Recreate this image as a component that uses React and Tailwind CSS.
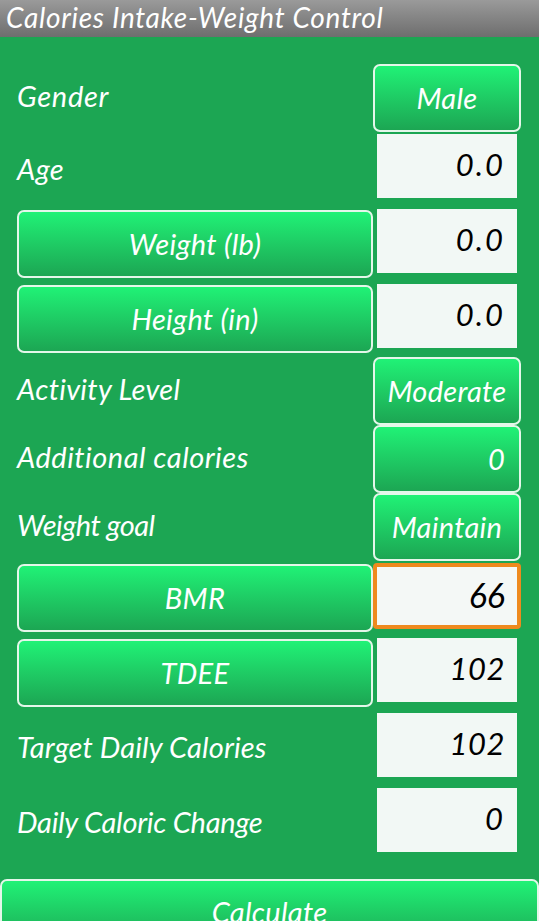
import React from 'react';

const font = "font-['Lato','Noto_Sans',sans-serif] italic";

const GreenButton = ({ children, className = '' }) => (
    <div className={`flex items-center rounded-[7px] border-2 border-[#e4f7ea] bg-gradient-to-b from-[#20f276] to-[#1ca653] text-[29px] tracking-[0.3px] text-white ${className}`}>
        {children}
    </div>
);

const Field = ({ value, className = 'tracking-[2px]' }) => (
    <div className={`mx-1 mt-[2px] flex h-[64px] items-center justify-end bg-[#f2f8f5] pr-[12px] pb-1 text-[31px] text-black ${className}`}>
        {value}
    </div>
);

const Label = ({ children, className = 'tracking-[0.4px]' }) => (
    <div className={`flex-1 pb-1 text-[29px] text-white ${className}`}>{children}</div>
);

const Row = ({ height, children }) => (
    <div className={`flex items-center pl-[17px] pr-[18px] ${height}`}>{children}</div>
);

const App = () => {
    return (
        <div className={`relative flex h-[921px] w-[539px] flex-col overflow-hidden bg-[#1ca653] ${font}`}>
            <div className="flex h-[37px] items-center bg-gradient-to-b from-[#9a9a9a] to-[#6e6e6e] pb-1 pl-[6px] text-[28px] tracking-[0.7px] text-white">
                Calories Intake-Weight Control
            </div>

            <div className="mt-[27px] flex flex-col">
                <Row height="h-[68px]">
                    <Label className="tracking-[0.7px]">Gender</Label>
                    <GreenButton className="h-[68px] w-[148px] justify-center">Male</GreenButton>
                </Row>
                <Row height="h-[75px] items-start">
                    <div className="flex-1 pt-[15px] text-[29px] tracking-[0.4px] text-white">Age</div>
                    <div className="w-[148px]"><Field value="0.0" /></div>
                </Row>
                <Row height="h-[75px] items-start">
                    <GreenButton className="mt-[3px] h-[68px] flex-1 justify-center">Weight (lb)</GreenButton>
                    <div className="w-[148px]"><Field value="0.0" /></div>
                </Row>
                <Row height="h-[75px] items-start">
                    <GreenButton className="mt-[3px] h-[68px] flex-1 justify-center">Height (in)</GreenButton>
                    <div className="w-[148px]"><Field value="0.0" /></div>
                </Row>
                <Row height="h-[68px]">
                    <Label className="tracking-[0.3px]">Activity Level</Label>
                    <GreenButton className="h-[68px] w-[148px] justify-center">Moderate</GreenButton>
                </Row>
                <Row height="h-[68px]">
                    <Label className="tracking-[0.5px]">Additional calories</Label>
                    <GreenButton className="h-[68px] w-[148px] justify-end pr-[14px]">0</GreenButton>
                </Row>
                <Row height="h-[68px]">
                    <Label className="tracking-[-0.5px]">Weight goal</Label>
                    <GreenButton className="h-[68px] w-[148px] justify-center">Maintain</GreenButton>
                </Row>
                <Row height="h-[75px] items-start">
                    <GreenButton className="mt-[3px] h-[68px] flex-1 justify-center">BMR</GreenButton>
                    <div className="mt-[2px] flex h-[66px] w-[148px] items-center justify-end rounded-[4px] border-4 border-[#ee8a1e] bg-[#f4f8f6] pr-[12px] pb-1 text-[34px] text-black">
                        66
                    </div>
                </Row>
                <Row height="h-[75px] items-start">
                    <GreenButton className="mt-[3px] h-[68px] flex-1 justify-center">TDEE</GreenButton>
                    <div className="w-[148px]"><Field value="102" className="tracking-[0.5px]" /></div>
                </Row>
                <Row height="h-[75px]">
                    <Label className="tracking-[0.15px]">Target Daily Calories</Label>
                    <div className="w-[148px] self-start"><Field value="102" className="tracking-[0.5px]" /></div>
                </Row>
                <Row height="h-[75px]">
                    <Label className="tracking-[-0.25px]">Daily Caloric Change</Label>
                    <div className="w-[148px] self-start"><Field value="0" /></div>
                </Row>
            </div>

            <GreenButton className="mt-[18px] h-[68px] w-full shrink-0 items-start justify-center pt-[9px]">Calculate</GreenButton>
        </div>
    );
};

export default App;
